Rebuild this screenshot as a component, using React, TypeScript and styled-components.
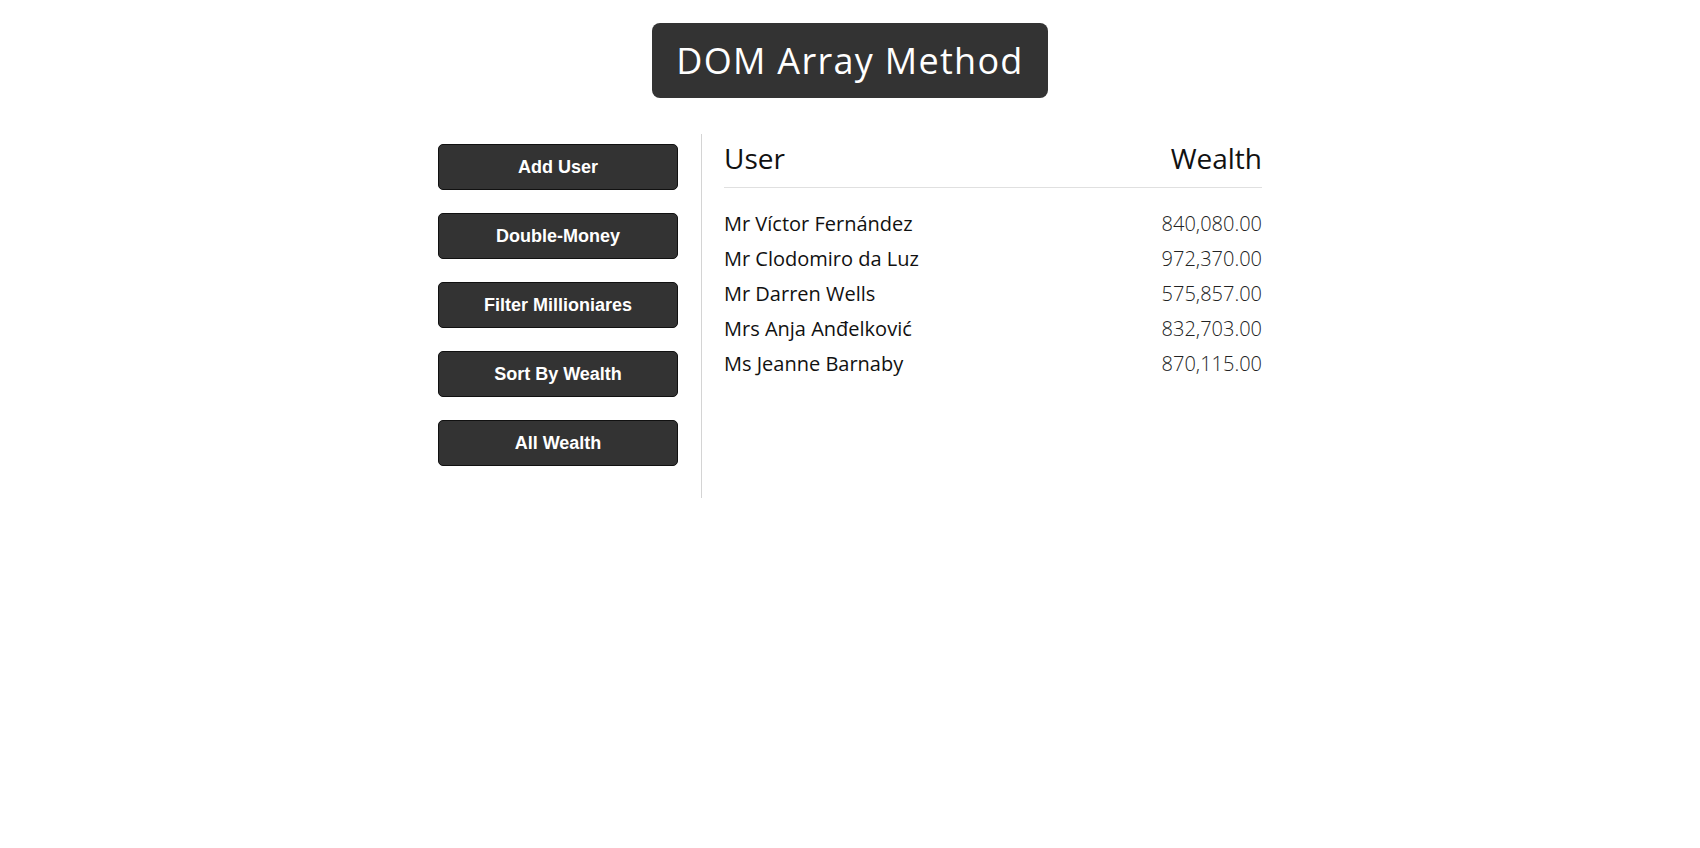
import styled, { createGlobalStyle } from "styled-components";

const GlobalStyle = createGlobalStyle`
  * {
    box-sizing: border-box;
  }
  body {
    margin: 0;
    background: #fff;
    font-family: "Open Sans", "Noto Sans", sans-serif;
    color: #111;
  }
`;

const StyledPage = styled.div`
  display: flex;
  flex-direction: column;
  align-items: center;
  min-height: 100vh;
`;

const StyledTitle = styled.h1`
  margin: 23px 0 16px;
  padding: 13px 24px;
  background: #333;
  color: #fff;
  border-radius: 8px;
  font-size: 36px;
  font-weight: 400;
  line-height: 49px;
  letter-spacing: 1.3px;
`;

const StyledContainer = styled.div`
  display: flex;
  align-items: flex-start;
  width: 904px;
  padding: 20px;
`;

const StyledAside = styled.aside`
  width: 284px;
  padding: 10px 23px 9px 20px;
  border-right: 1px solid #d4d4d4;
`;

const StyledButton = styled.button`
  display: block;
  width: 240px;
  height: 46px;
  margin-bottom: 23px;
  background: #333;
  color: #fff;
  border: 1px solid #111;
  border-radius: 5px;
  font-family: "Liberation Sans", Arial, sans-serif;
  font-size: 18px;
  font-weight: bold;
  cursor: pointer;
`;

const StyledMain = styled.main`
  flex: 1;
  padding: 9px 20px 10px 22px;
`;

const StyledHeading = styled.h2`
  display: flex;
  justify-content: space-between;
  margin: 0 0 23px;
  padding-bottom: 13px;
  border-bottom: 1px solid #e0e0e0;
  font-size: 28px;
  font-weight: 400;
  line-height: 31px;
`;

const StyledPerson = styled.div`
  display: flex;
  justify-content: space-between;
  margin-bottom: 10px;
  font-size: 20px;
  line-height: 25px;
`;

const StyledName = styled.span`
  color: #111;
`;

const StyledMoney = styled.span`
  color: #222;
  font-weight: 300;
`;

const actions = [
  "Add User",
  "Double-Money",
  "Filter Millioniares",
  "Sort By Wealth",
  "All Wealth",
];

const people = [
  { name: "Mr Víctor Fernández", money: 840080 },
  { name: "Mr Clodomiro da Luz", money: 972370 },
  { name: "Mr Darren Wells", money: 575857 },
  { name: "Mrs Anja Anđelković", money: 832703 },
  { name: "Ms Jeanne Barnaby", money: 870115 },
];

const formatMoney = (n: number) =>
  n.toFixed(2).replace(/\d(?=(\d{3})+\.)/g, "$&,");

const App = () => {
  return (
    <StyledPage>
      <GlobalStyle />
      <StyledTitle>DOM Array Method</StyledTitle>
      <StyledContainer>
        <StyledAside>
          {actions.map((label) => (
            <StyledButton key={label}>{label}</StyledButton>
          ))}
        </StyledAside>
        <StyledMain>
          <StyledHeading>
            <span>User</span>
            <span>Wealth</span>
          </StyledHeading>
          {people.map((p) => (
            <StyledPerson key={p.name}>
              <StyledName>{p.name}</StyledName>
              <StyledMoney>{formatMoney(p.money)}</StyledMoney>
            </StyledPerson>
          ))}
        </StyledMain>
      </StyledContainer>
    </StyledPage>
  );
};

export default App;
